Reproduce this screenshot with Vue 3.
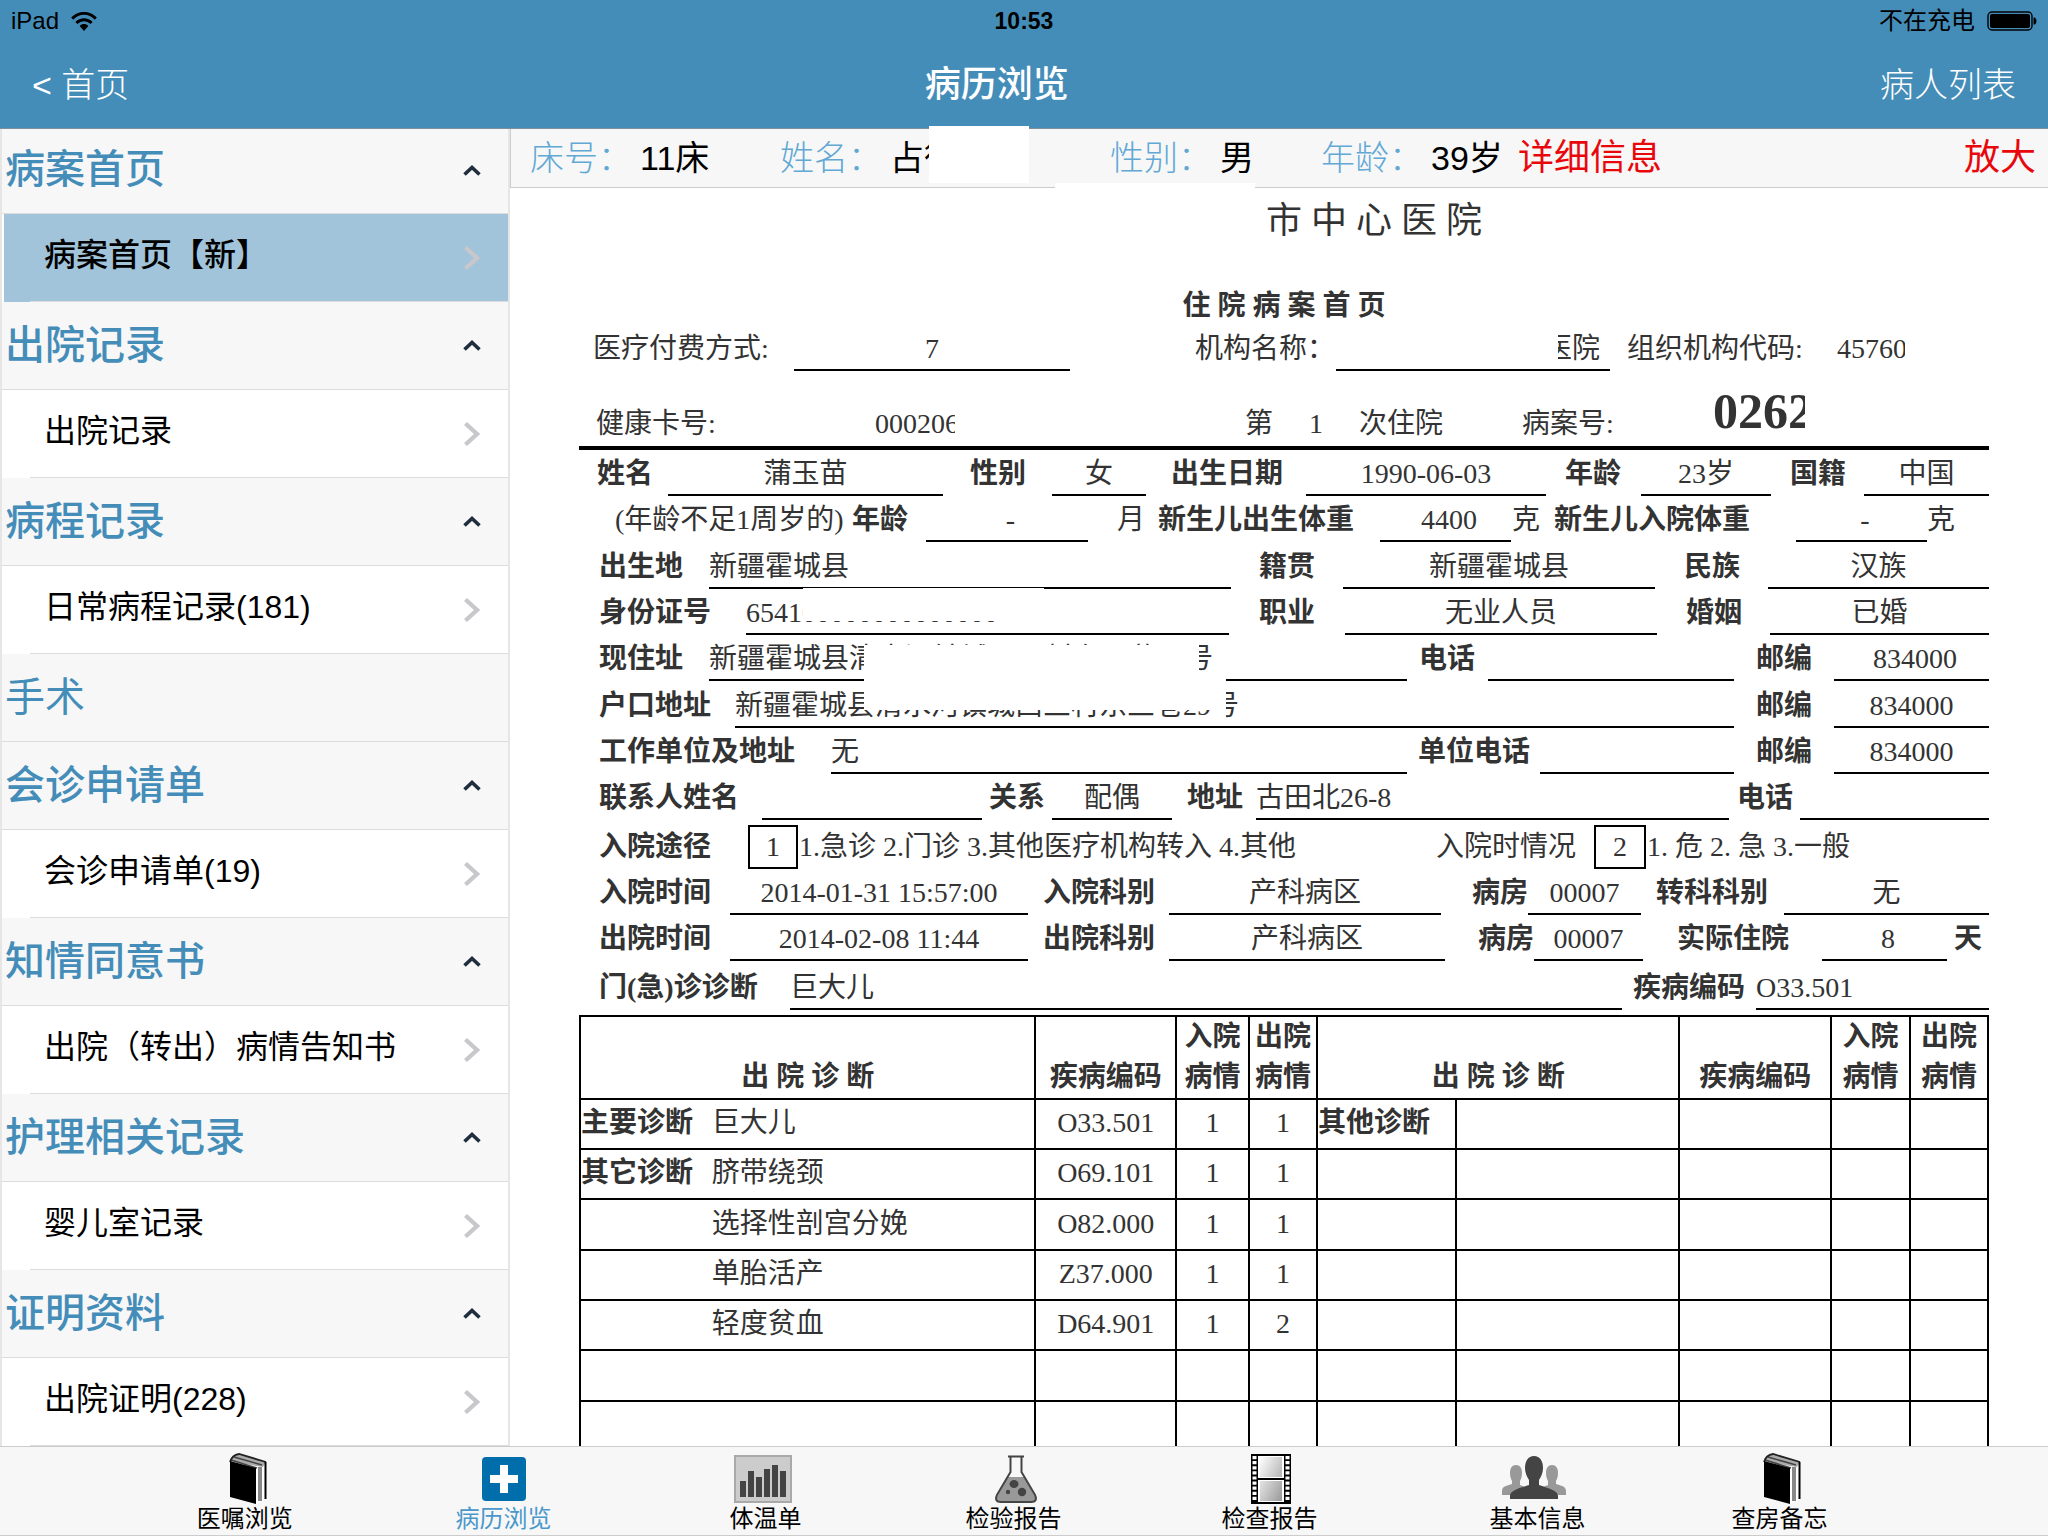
<script setup>
import { ref } from 'vue'

const sections = [
  { title: '病案首页', items: ['病案首页【新】'] },
  { title: '出院记录', items: ['出院记录'] },
  { title: '病程记录', items: ['日常病程记录(181)'] },
  { title: '手术', items: [] },
  { title: '会诊申请单', items: ['会诊申请单(19)'] },
  { title: '知情同意书', items: ['出院（转出）病情告知书'] },
  { title: '护理相关记录', items: ['婴儿室记录'] },
  { title: '证明资料', items: ['出院证明(228)'] },
]
const selected = ref('病案首页【新】')

const tabs = [
  { label: '医嘱浏览', icon: 'book' },
  { label: '病历浏览', icon: 'plus' },
  { label: '体温单', icon: 'chart' },
  { label: '检验报告', icon: 'flask' },
  { label: '检查报告', icon: 'film' },
  { label: '基本信息', icon: 'people' },
  { label: '查房备忘', icon: 'book' },
]
const activeTab = ref('病历浏览')

// The sheet is 1410 units wide. A cell is [start, end, text, classes].
const SHEET = 1410
const L = 'bold'
const V = 'line center'
const T = 'line'

const titleRow = [[687, 922, '市 中 心 医 院', 'title']]
const payRow = [
  [14, 200, '医疗付费方式:', ''],
  [215, 491, '7', V],
  [616, 740, '机构名称：', ''],
  [757, 1031, '医院', 'line end clip-left'],
  [1048, 1240, '组织机构代码:', ''],
  [1258, 1326, '45760', 'clip'],
]
const cardRow = [
  [17, 160, '健康卡号:', ''],
  [296, 376, '000206', 'clip'],
  [666, 700, '第', ''],
  [730, 750, '1', ''],
  [780, 880, '次住院', ''],
  [943, 1050, '病案号:', ''],
  [1134, 1226, '0262', 'clip case-no'],
]
const rows = [
  [[18, 80, '姓名', L], [89, 364, '蒲玉苗', V], [391, 460, '性别', L], [473, 567, '女', V], [592, 720, '出生日期', L], [727, 967, '1990-06-03', V], [986, 1050, '年龄', L], [1062, 1192, '23岁', V], [1211, 1275, '国籍', L], [1285, 1410, '中国', V]],
  [[36, 270, '(年龄不足1周岁的)', ''], [273, 340, '年龄', L], [347, 509, '\u00a0-', V], [538, 570, '月', ''], [579, 790, '新生儿出生体重', L], [801, 932, '\u00a04400', V], [933, 970, '克', ''], [975, 1180, '新生儿入院体重', L], [1217, 1348, '\u00a0-', V], [1348, 1390, '克', '']],
  [[20, 120, '出生地', L], [130, 652, '新疆霍城县', T], [680, 750, '籍贯', L], [764, 1076, '新疆霍城县', V], [1105, 1170, '民族', L], [1189, 1410, '汉族', V]],
  [[20, 150, '身份证号', L], [167, 650, '654100000000000000', T], [680, 750, '职业', L], [766, 1078, '无业人员', V], [1107, 1170, '婚姻', L], [1191, 1410, '已婚', V]],
  [[20, 120, '现住址', L], [130, 828, '新疆霍城县清水河镇城西三村东三巷29号', T], [840, 900, '电话', L], [909, 1155, '', T], [1177, 1240, '邮编', L], [1255, 1410, '\u00a0834000', V]],
  [[20, 150, '户口地址', L], [156, 1155, '新疆霍城县清水河镇城西三村东三巷29号', T], [1177, 1240, '邮编', L], [1255, 1410, '834000', V]],
  [[20, 230, '工作单位及地址', L], [252, 828, '无', T], [839, 955, '单位电话', L], [961, 1155, '', T], [1177, 1240, '邮编', L], [1255, 1410, '834000', V]],
  [[20, 170, '联系人姓名', L], [183, 403, '', T], [410, 470, '关系', L], [473, 593, '配偶', V], [608, 670, '地址', L], [677, 1150, '古田北26-8', T], [1158, 1218, '电话', L], [1221, 1410, '', T]],
]
const stayRows = [
  [[20, 150, '入院途径', L], [169, 219, '1', 'box center'], [220, 740, '1.急诊 2.门诊 3.其他医疗机构转入 4.其他', ''], [857, 1000, '入院时情况', ''], [1015, 1067, '2', 'box center'], [1068, 1300, '1. 危 2. 急 3.一般', '']],
  [[20, 145, '入院时间', L], [151, 449, '2014-01-31 15:57:00', V], [464, 580, '入院科别', L], [590, 862, '产科病区', V], [893, 948, '病房', L], [949, 1062, '00007', V], [1077, 1195, '转科科别', L], [1205, 1410, '无', V]],
  [[20, 145, '出院时间', L], [151, 449, '2014-02-08 11:44', V], [464, 580, '出院科别', L], [590, 866, '产科病区', V], [899, 954, '病房', L], [955, 1064, '00007', V], [1098, 1215, '实际住院', L], [1243, 1368, '\u00a08', V], [1375, 1410, '天', L]],
  [[20, 190, '门(急)诊诊断', L], [211, 1043, '巨大儿', T], [1054, 1175, '疾病编码', L], [1177, 1410, 'O33.501', T]],
]

const lines = rows.concat(stayRows)

function columns(cells) {
  const out = []
  let cursor = 0
  for (const [from, to] of cells) {
    out.push(from - cursor, to - from)
    cursor = to
  }
  out.push(SHEET - cursor)
  return { gridTemplateColumns: out.map((n) => `minmax(0, ${n}fr)`).join(' ') }
}
function column(i) {
  return { gridColumn: 2 * i + 2 }
}

const tableColumns = [132, 324, 141, 73, 68, 139, 224, 152, 79, 78]
const diagnoses = [
  ['主要诊断', '巨大儿', 'O33.501', '1', '1', '其他诊断'],
  ['其它诊断', '脐带绕颈', 'O69.101', '1', '1', ''],
  ['', '选择性剖宫分娩', 'O82.000', '1', '1', ''],
  ['', '单胎活产', 'Z37.000', '1', '1', ''],
  ['', '轻度贫血', 'D64.901', '1', '2', ''],
  ['', '', '', '', '', ''],
  ['', '', '', '', '', ''],
]
</script>

<template>
  <div class="app">
    <header class="top">
      <div class="status">
        <div class="status-left">
          <span>iPad</span>
          <svg class="wifi" viewBox="0 0 26 19" aria-hidden="true">
            <g fill="none" stroke="#000" stroke-width="3">
              <path d="M1.200 6.600C8-.4 18-.4 24.800 6.600" />
              <path d="M5.400 11C9.800 6.600 16.200 6.600 20.600 11" />
            </g>
            <path d="M8.600 14C11 11.400 15 11.400 17.400 14L13 19z" />
          </svg>
        </div>
        <strong class="clock">10:53</strong>
        <div class="status-right">
          <span>不在充电</span>
          <svg class="battery" viewBox="0 0 50 20" aria-hidden="true">
            <rect x="1" y="1" width="44" height="18" rx="4" fill="none" stroke="#000" stroke-width="1.4" />
            <rect x="3" y="3" width="40" height="14" rx="2" />
            <path d="M46.500 6.500h1.500q1.500 1.500 1.500 3.500t-1.500 3.500h-1.500z" />
          </svg>
        </div>
      </div>
      <nav class="nav">
        <a href="#home" class="back">&lt; 首页</a>
        <h1>病历浏览</h1>
        <a href="#patients" class="patients">病人列表</a>
      </nav>
    </header>

    <div class="body">
      <aside class="sidebar">
        <section v-for="s in sections" :key="s.title">
          <button type="button" class="group" :class="{ plain: !s.items.length }">
            <span>{{ s.title }}</span>
            <svg v-if="s.items.length" class="caret" viewBox="0 0 18 11" aria-hidden="true">
              <path d="M1.500 9.500L9 2.500l7.500 7" fill="none" stroke="#1f2d3d" stroke-width="3.600" />
            </svg>
          </button>
          <button
            v-for="item in s.items"
            :key="item"
            type="button"
            class="item"
            :class="{ selected: item === selected }"
            @click="selected = item"
          >
            <span>{{ item }}</span>
            <svg class="chevron" viewBox="0 0 18 26" aria-hidden="true">
              <path d="M2.500 2.500L14 13 2.500 23.500" fill="none" stroke="#c7c7cc" stroke-width="4.400" />
            </svg>
          </button>
        </section>
      </aside>

      <main class="main">
        <div class="patient">
          <dl>
            <div><dt>床号：</dt><dd>11床</dd></div>
            <div><dt>姓名：</dt><dd>占衍</dd></div>
            <div><dt>性别：</dt><dd>男</dd></div>
            <div><dt>年龄：</dt><dd>39岁</dd></div>
          </dl>
          <a href="#detail">详细信息</a>
          <a href="#zoom" class="enlarge">放大</a>
          <i class="cover cover-name"></i>
          <i class="cover cover-edge"></i>
        </div>

        <article class="sheet">
          <div class="row title-row" :style="columns(titleRow)">
            <h2 v-for="(c, i) in titleRow" :key="i" :class="c[3]" :style="column(i)">{{ c[2] }}</h2>
          </div>
          <h3>住 院 病 案 首 页</h3>
          <div class="row" :style="columns(payRow)">
            <div v-for="(c, i) in payRow" :key="i" class="cell" :class="c[3]" :style="column(i)"><span>{{ c[2] }}</span></div>
          </div>
          <div class="row card-row" :style="columns(cardRow)">
            <div v-for="(c, i) in cardRow" :key="i" class="cell" :class="c[3]" :style="column(i)"><span>{{ c[2] }}</span></div>
          </div>
          <div class="records">
            <div v-for="(r, n) in lines" :key="n" class="row" :style="columns(r)">
              <div v-for="(c, i) in r" :key="i" class="cell" :class="c[3]" :style="column(i)"><span>{{ c[2] }}</span></div>
            </div>
            <i class="cover cover-id"></i>
            <i class="cover cover-address"></i>
            <i class="cover cover-home"></i>
            <i class="cover cover-number"></i>
          </div>

          <table>
            <colgroup>
              <col v-for="(w, i) in tableColumns" :key="i" :style="{ width: (w / SHEET) * 100 + '%' }" />
            </colgroup>
            <thead>
              <tr>
                <th colspan="2">出 院 诊 断</th>
                <th>疾病编码</th>
                <th>入院<br />病情</th>
                <th>出院<br />病情</th>
                <th colspan="2">出 院 诊 断</th>
                <th>疾病编码</th>
                <th>入院<br />病情</th>
                <th>出院<br />病情</th>
              </tr>
            </thead>
            <tbody>
              <tr v-for="(d, i) in diagnoses" :key="i">
                <td class="kind">{{ d[0] }}</td>
                <td class="diagnosis">{{ d[1] }}</td>
                <td>{{ d[2] }}</td>
                <td>{{ d[3] }}</td>
                <td>{{ d[4] }}</td>
                <td class="other">{{ d[5] }}</td>
                <td></td>
                <td></td>
                <td></td>
                <td></td>
              </tr>
            </tbody>
          </table>
        </article>
      </main>
    </div>

    <footer class="tabs">
      <button
        v-for="t in tabs"
        :key="t.label"
        type="button"
        :class="{ active: t.label === activeTab }"
        @click="activeTab = t.label"
      >
        <svg v-if="t.icon === 'book'" viewBox="0 0 64 52" aria-hidden="true">
          <path d="M17 8Q19 2 26 1L53 9V46L43 51 17 43z" fill="#fff" />
          <path d="M17 8Q19 2 26 1L53 9 50 14 43 13z" fill="#aaa" />
          <path d="M18 7L44 15M21 4L49 12" stroke="#444" stroke-width="1.500" fill="none" />
          <path d="M17 9Q19 2 26 1L53 9" stroke="#222" stroke-width="1.800" fill="none" />
          <path d="M17 8L43 15V51L17 44z" />
          <path d="M47 14V48" stroke="#888" stroke-width="4" />
          <path d="M52.500 9V46" stroke="#000" stroke-width="2" />
        </svg>
        <svg v-else-if="t.icon === 'plus'" viewBox="0 0 64 52" aria-hidden="true">
          <rect x="10" y="4" width="44" height="44" rx="4" fill="#006eab" />
          <path d="M28 12h8v10h10v8H36v10h-8V30H18v-8h10z" fill="#fff" />
        </svg>
        <svg v-else-if="t.icon === 'chart'" viewBox="0 0 64 52" aria-hidden="true">
          <rect x="1" y="3" width="56" height="46" fill="#ccc" stroke="#a9a9a9" stroke-width="2" />
          <path d="M6 28h6v16H6zM14 18h6v26h-6zM22 24h6v20h-6zM30 16h6v28h-6zM38 12h6v32h-6zM46 18h6v26h-6z" fill="#444" />
        </svg>
        <svg v-else-if="t.icon === 'flask'" viewBox="0 0 64 52" aria-hidden="true">
          <path d="M26 24h16l11 20q2 5-3 5H18q-5 0-3-5z" fill="#999" />
          <path d="M28.500 4V19L15 42Q12 49 19 49H49Q56 49 53 42L39.500 19V4M26 3.500H42" fill="none" stroke="#444" stroke-width="2" />
          <ellipse cx="32" cy="31" rx="4.500" ry="4" fill="#444" />
          <circle cx="26" cy="39" r="2.200" fill="#444" />
          <circle cx="40" cy="39" r="4.200" fill="#444" />
        </svg>
        <svg v-else-if="t.icon === 'film'" viewBox="0 0 64 52" aria-hidden="true">
          <defs>
            <linearGradient id="frame" x1="0" y1="0" x2="1" y2="1">
              <stop offset="0" stop-color="#fff" />
              <stop offset="1" stop-color="#999" />
            </linearGradient>
          </defs>
          <path d="M14 1h40v50H14z" />
          <path d="M17.500 3v46M50.500 3v46" stroke="#fff" stroke-width="4" stroke-dasharray="3.200 1.900" />
          <path d="M21 3h26v22H21zM21 27h26v22H21z" fill="#fff" />
          <path d="M23 4h22v20H23zM23 28h22v20H23z" fill="url(#frame)" />
        </svg>
        <svg v-else class="people" viewBox="3 0 64 52" aria-hidden="true">
          <path d="M14 12c4 0 6 3 6 8 0 4-1 6-2 8v4l8 3v7H0v-4c0-4 3-5 10-7v-3c-1-2-2-4-2-8 0-5 2-8 6-8zM50 12c4 0 6 3 6 8 0 4-1 6-2 8v3c7 2 10 3 10 7v4H38v-7l8-3v-4c-1-2-2-4-2-8 0-5 2-8 6-8z" fill="#999" />
          <path d="M32 3c6 0 9 5 9 12 0 5-2 9-4 12v5c8 3 19 5 19 11v3H8v-3c0-6 11-8 19-11v-5c-2-3-4-7-4-12 0-7 3-12 9-12z" fill="#444" />
        </svg>
        <span>{{ t.label }}</span>
      </button>
    </footer>
  </div>
</template>

<style>
body {
  margin: 0;
}
</style>

<style scoped>
.app {
  display: flex;
  flex-direction: column;
  height: 100vh;
  overflow: hidden;
  background: #fff;
  color: #000;
  font-family: "Liberation Sans", "Noto Sans CJK SC", sans-serif;
  font-weight: 400;
}
.app * {
  box-sizing: border-box;
}
button {
  margin: 0;
  border: 0;
  background: none;
  font: inherit;
  color: inherit;
}
a {
  color: inherit;
  text-decoration: none;
}
h1,
h2,
h3,
dl,
dd {
  margin: 0;
}

.top {
  flex: none;
  background: #458db9;
  border-bottom: 1px solid #7d8f9b;
}
.status {
  display: grid;
  grid-template-columns: 1fr auto 1fr;
  align-items: center;
  height: 40px;
  padding: 2px 11px 0;
  font-size: 24px;
  line-height: 38px;
}
.status-left,
.status-right {
  display: flex;
  align-items: center;
  gap: 12px;
}
.status-right {
  justify-content: flex-end;
}
.wifi {
  width: 26px;
  height: 19px;
}
.battery {
  width: 50px;
  height: 20px;
}
.clock {
  font-size: 23px;
}
.nav {
  display: flex;
  justify-content: space-between;
  height: 88px;
  padding: 0 32px;
  color: #fff;
  font-size: 34px;
  font-weight: 300;
  line-height: 90px;
}
.nav h1 {
  padding-right: 16px;
  font-size: 36px;
  font-weight: 500;
}

.body {
  display: flex;
  flex: 1;
  min-height: 0;
}
.sidebar {
  flex: none;
  width: 510px;
  overflow: hidden;
  border: solid #e6e6e6;
  border-width: 0 2px;
}
.group,
.item {
  display: flex;
  align-items: center;
  justify-content: space-between;
  width: 100%;
  height: 88px;
  text-align: left;
}
.group {
  padding: 0 27px 0 3px;
  border-bottom: 1px solid #dcdcdc;
  background: #f7f7f7;
  color: #458db9;
  font-size: 40px;
  font-weight: 500;
}
.group span {
  padding-bottom: 8px;
}
.group.plain {
  font-weight: 400;
}
section:first-child .group {
  height: 85px;
  padding-bottom: 2px;
}
.caret {
  width: 18px;
  height: 11px;
}
.item {
  position: relative;
  padding: 0 27px 0 42px;
  font-size: 32px;
}
.item span {
  padding-bottom: 13px;
}
.item::after {
  content: "";
  position: absolute;
  right: 0;
  bottom: 0;
  left: 28px;
  border-bottom: 1px solid #dcdcdc;
}
.item.selected {
  background: #a1c4da;
  box-shadow: inset 2px 0 #fff;
  font-weight: 500;
}
.chevron {
  width: 18px;
  height: 26px;
}

.main {
  flex: 1;
  min-width: 0;
}
.patient {
  position: relative;
  display: flex;
  height: 59px;
  padding: 0 12px 0 19px;
  border-bottom: 1px solid #ccc;
  border-left: 1px solid #ccc;
  background: #f7f7f7;
  line-height: 58px;
}
.patient dl {
  display: grid;
  grid-template-columns: 250px 330px 211px 197px;
  font-size: 34px;
}
.patient dl div {
  display: flex;
}
.patient dt {
  width: 110px;
  color: #62a8d5;
  font-weight: 300;
}
.patient a {
  color: #e8080c;
  font-size: 36px;
}
.enlarge {
  margin-left: auto;
}
.cover {
  position: absolute;
  background: #fff;
}
.cover-name {
  top: -3px;
  left: 418px;
  width: 100px;
  height: 57px;
}
.cover-edge {
  top: 54px;
  left: 544px;
  width: 200px;
  height: 6px;
}

.sheet {
  height: calc(100% - 59px);
  padding: 0 59px 0 69px;
  overflow: hidden;
  color: #333;
  font-family: "Liberation Serif", "Noto Sans CJK SC", serif;
  font-size: 28px;
  white-space: nowrap;
}
.row {
  display: grid;
  align-items: end;
}
.title-row {
  height: 67px;
  align-items: center;
}
.title {
  font-size: 36px;
  font-weight: 400;
  line-height: 67px;
}
h3 {
  height: 40px;
  margin-top: 30px;
  font-size: 28px;
  line-height: 42px;
  text-align: center;
}
.cell {
  height: 46px;
  line-height: 48px;
}
.bold {
  font-weight: 700;
}
.line {
  border-bottom: 2px solid #000;
}
.center {
  text-align: center;
}
.end {
  text-align: right;
}
.clip {
  overflow: hidden;
}
.clip-left span {
  display: inline-flex;
  justify-content: flex-end;
  width: 42px;
  height: 44px;
  margin-right: 10px;
  overflow: hidden;
}
.case-no {
  height: 70px;
  font-size: 50px;
  font-weight: 700;
  line-height: 70px;
}
.card-row {
  height: 79px;
  border-bottom: 4px solid #000;
}
.records {
  position: relative;
}
.records .row {
  height: 46px;
}
.records .row:nth-child(3n) {
  height: 47px;
}
.records .row:nth-child(9),
.records .row:nth-child(12) {
  height: 49px;
}
.box {
  height: 44px;
  border: 2px solid #000;
  line-height: 40px;
}
.cover-id {
  top: 138px;
  left: 224px;
  width: 241px;
  height: 33px;
}
.cover-address {
  top: 195px;
  left: 285px;
  width: 335px;
  height: 30px;
}
.cover-home {
  top: 225px;
  left: 285px;
  width: 362px;
  height: 35px;
}
.cover-number {
  top: 260px;
  left: 632px;
  width: 15px;
  height: 12px;
}

table {
  width: 100%;
  margin-top: 5px;
  border-collapse: collapse;
  table-layout: fixed;
}
th,
td {
  padding: 0;
  border: 2px solid #000;
  text-align: center;
}
th {
  height: 83px;
  padding-bottom: 1px;
  line-height: 40px;
  vertical-align: bottom;
}
td {
  height: 50px;
  padding-bottom: 2px;
  line-height: 46px;
}
tbody tr:nth-child(3n) td {
  height: 51px;
}
.kind,
.diagnosis,
.other {
  text-align: left;
}
.kind {
  border-right: 0;
  font-weight: 700;
}
.diagnosis {
  border-left: 0;
}
.other {
  font-weight: 700;
}

.tabs {
  display: grid;
  flex: none;
  grid-template-columns: 260fr 258fr 266fr 230fr 282fr 254fr 230fr;
  height: 90px;
  padding: 0 7.5% 0 5.6%;
  border: solid #ccc;
  border-width: 1px 0;
  background: #f7f7f7;
}
.tabs button {
  display: flex;
  flex-direction: column;
  align-items: center;
  padding: 6px 0 0;
  font-size: 24px;
  line-height: 28px;
}
.tabs svg {
  width: 64px;
  height: 52px;
}
.tabs .people {
  overflow: visible;
}
.tabs .active {
  color: #4a97cb;
}
</style>
